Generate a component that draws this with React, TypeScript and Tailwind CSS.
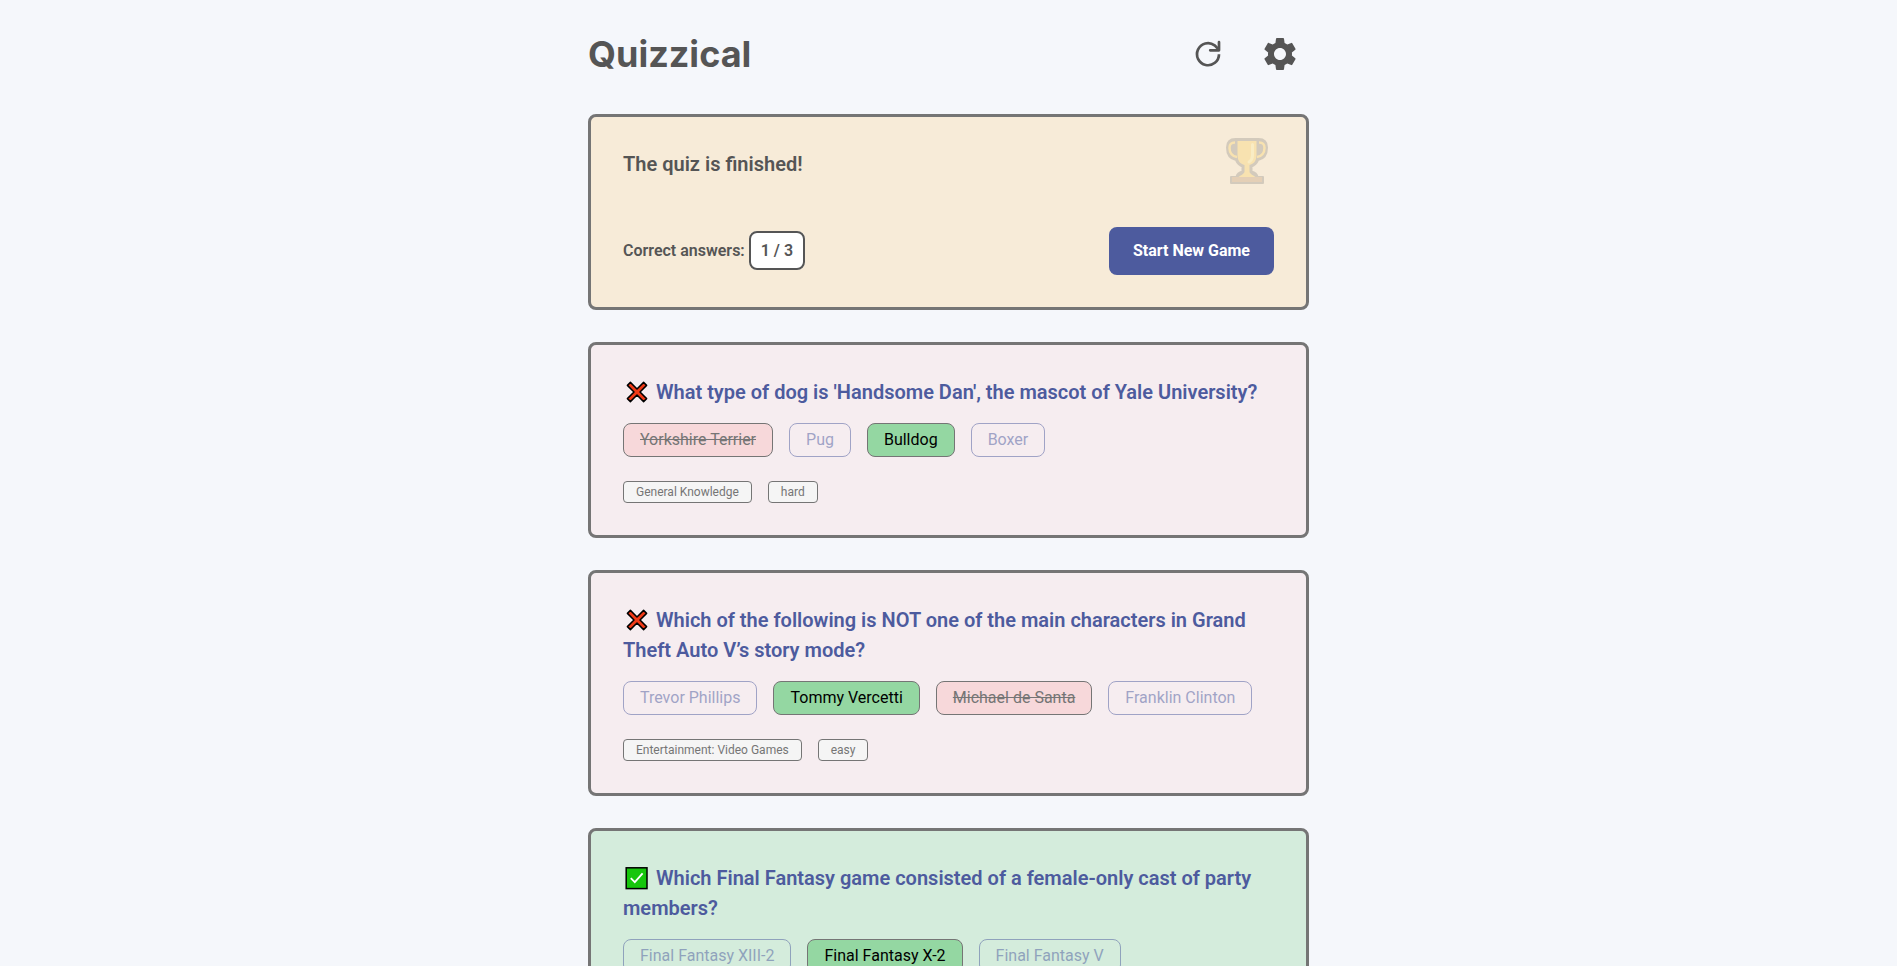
import { MdSettings } from "react-icons/md";

type AnswerState = "idle" | "correct" | "wrong";

interface Question {
  text: string;
  correct: boolean;
  answers: { label: string; state: AnswerState }[];
  tags: string[];
}

const questions: Question[] = [
  {
    text: "What type of dog is 'Handsome Dan', the mascot of Yale University?",
    correct: false,
    answers: [
      { label: "Yorkshire Terrier", state: "wrong" },
      { label: "Pug", state: "idle" },
      { label: "Bulldog", state: "correct" },
      { label: "Boxer", state: "idle" },
    ],
    tags: ["General Knowledge", "hard"],
  },
  {
    text: "Which of the following is NOT one of the main characters in Grand Theft Auto V’s story mode?",
    correct: false,
    answers: [
      { label: "Trevor Phillips", state: "idle" },
      { label: "Tommy Vercetti", state: "correct" },
      { label: "Michael de Santa", state: "wrong" },
      { label: "Franklin Clinton", state: "idle" },
    ],
    tags: ["Entertainment: Video Games", "easy"],
  },
  {
    text: "Which Final Fantasy game consisted of a female-only cast of party members?",
    correct: true,
    answers: [
      { label: "Final Fantasy XIII-2", state: "idle" },
      { label: "Final Fantasy X-2", state: "correct" },
      { label: "Final Fantasy V", state: "idle" },
    ],
    tags: [],
  },
];

const answerStyles: Record<AnswerState, string> = {
  idle: "border-[#4d5b9e] text-[#4d5b9e] opacity-50",
  correct: "border-[#757575] bg-[#94d7a2] text-black",
  wrong: "border-[#757575] bg-[#f7d8da] text-[#757575] line-through",
};

function ReloadIcon() {
  return (
    <svg
      viewBox="0 0 30 30"
      className="size-[30px]"
      fill="none"
      stroke="currentColor"
      strokeWidth="2.7"
      aria-hidden="true"
    >
      <path d="M26 15.2A11 11 0 1 1 21.6 6.4L25.5 10.2" />
      <path d="M26 3.2v8.1h-8.8" strokeLinecap="round" strokeLinejoin="round" />
    </svg>
  );
}

function CrossMark() {
  return (
    <svg viewBox="0 0 28 24" className="inline-block h-6 w-7 align-middle" role="img" aria-label="Incorrect">
      <path
        d="M7.4 2.4 14 9l6.6-6.6 3 3L17 12l6.6 6.6-3 3L14 15l-6.6 6.6-3-3L11 12 4.4 5.4z"
        fill="#f03a17"
        stroke="#000"
        strokeWidth="1.5"
        strokeLinejoin="round"
      />
    </svg>
  );
}

function CheckMark() {
  return (
    <svg viewBox="0 0 28 24" className="inline-block h-6 w-7 align-middle" role="img" aria-label="Correct">
      <rect x="3.2" y="1.8" width="20.8" height="20.8" fill="#16c60c" stroke="#000" strokeWidth="1.5" />
      <path d="M7.8 12.2 11.8 16.2 19.6 7.4" fill="none" stroke="#fff" strokeWidth="1.8" />
    </svg>
  );
}

function Trophy() {
  return (
    <svg viewBox="0 0 42 46" className="h-[46px] w-[42px] opacity-25" role="img" aria-label="Trophy">
      <path
        d="M9.500 1h23c6 0 8.500 3 8.500 8.500C41 17 37 21 32 22c-1.500 3.500-4 5.500-6.500 6.500v5c4 1 5.500 3 6 5.500H37v6H5v-6h5.500c.5-2.500 2-4.500 6-5.500v-5c-2.500-1-5-3-6.500-6.500C5 21 1 17 1 9.500 1 4 3.500 1 9.500 1z"
        fill="#6b6b6b"
        stroke="#6b6b6b"
        strokeWidth="2"
        strokeLinejoin="round"
      />
      <path
        d="M9 4.500C5 4.500 3.500 6 3.500 10c0 5 3 8.500 7.500 9M33 4.500c4 0 5.500 1.500 5.500 5.500 0 5-3 8.500-7.500 9"
        fill="none"
        stroke="#fdcb3b"
        strokeWidth="2.500"
      />
      <path
        d="M11.500 3h19v14c0 6-3 9-7 10v6.500c0 2 3 3.500 6 5.500h-17c3-2 6-3.500 6-5.500V27c-4-1-7-4-7-10z"
        fill="#fdcb3b"
      />
      <path d="M26.500 6.500v11c0 3-1 5-3.500 6.500" fill="none" stroke="#fff08a" strokeWidth="3" strokeLinecap="round" />
      <path d="M6 39h30v5H6z" fill="#ae7d55" />
    </svg>
  );
}

function QuestionCard({ question }: { question: Question }) {
  return (
    <article
      className={`flex flex-col rounded-lg border-3 border-[#757575] p-8 ${
        question.correct ? "bg-[#d4ecdc]" : "bg-[#f6edf0]"
      }`}
    >
      <h2 className="text-xl/[30px] font-semibold text-[#4d5b9e]">
        <span className="inline-flex h-[30px] items-center align-top">
          {question.correct ? <CheckMark /> : <CrossMark />}
        </span>{" "}
        {question.text}
      </h2>
      <div className="mt-4 flex flex-wrap gap-4">
        {question.answers.map(({ label, state }) => (
          <button
            key={label}
            type="button"
            className={`rounded-lg border px-4 py-1 text-base ${answerStyles[state]}`}
          >
            {label}
          </button>
        ))}
      </div>
      {question.tags.length > 0 && (
        <ul className="mt-6 flex flex-wrap gap-4">
          {question.tags.map((tag) => (
            <li
              key={tag}
              className="rounded-sm border border-[#757575] bg-[#f5f5f5] px-3 py-0.5 text-xs text-[#757575]"
            >
              {tag}
            </li>
          ))}
        </ul>
      )}
    </article>
  );
}

export default function App() {
  return (
    <div className="min-h-screen bg-[#f5f7fb] px-4 pb-8 font-['Roboto',sans-serif] text-[#555555]">
      <div className="mx-auto max-w-[721px]">
        <header className="flex items-center justify-between pt-6 pb-[30px]">
          <h1 className="font-['Inter',sans-serif] text-4xl font-bold">Quizzical</h1>
          <div className="flex items-center gap-3.5">
            <button type="button" aria-label="Restart quiz" className="flex h-[60px] w-[58px] items-center justify-center">
              <ReloadIcon />
            </button>
            <button type="button" aria-label="Settings" className="flex h-[60px] w-[58px] items-center justify-center">
              <MdSettings className="size-10" />
            </button>
          </div>
        </header>
        <main className="flex flex-col gap-8">
          <section className="relative flex flex-col gap-12 rounded-lg border-3 border-[#757575] bg-[#f7ebd8] p-8">
            <h2 className="text-xl/[30px] font-semibold">The quiz is finished!</h2>
            <div className="absolute top-[21px] right-[38px]">
              <Trophy />
            </div>
            <div className="flex items-center justify-between">
              <p className="font-semibold">
                Correct answers:{" "}
                <span className="rounded-lg border-2 border-[#555555] bg-white px-2.5 py-2">1 / 3</span>
              </p>
              <button type="button" className="rounded-lg bg-[#4d5b9e] px-6 py-3 font-bold text-white">
                Start New Game
              </button>
            </div>
          </section>
          {questions.map((question) => (
            <QuestionCard key={question.text} question={question} />
          ))}
        </main>
      </div>
    </div>
  );
}
